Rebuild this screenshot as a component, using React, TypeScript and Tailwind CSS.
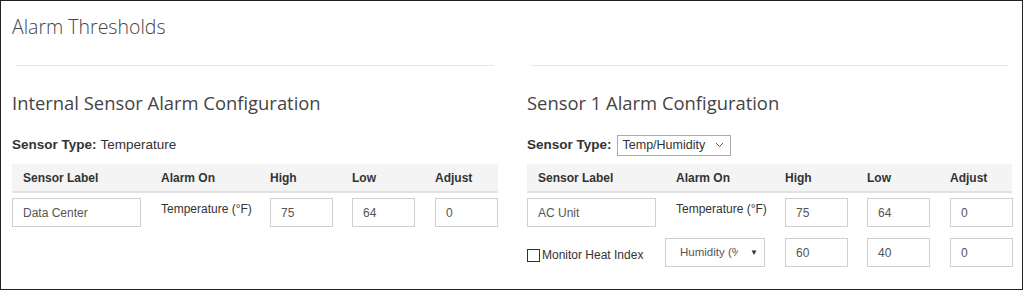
const sans = "font-['Liberation_Sans',Arial,sans-serif]";

function Field({ value, className }: { value: string; className: string }) {
  return (
    <div className={`flex h-[29px] items-center border border-[#cfcfcf] bg-white pl-[10px] text-[12px] text-[#555] ${className}`}>
      {value}
    </div>
  );
}

function HeaderRow({ cols }: { cols: string }) {
  return (
    <div className={`mt-[9px] grid ${cols} h-[29px] items-center border-b-2 border-[#e2e2e2] bg-[#f4f4f4] text-[12px] font-bold text-[#333]`}>
      <span className="pl-[11px]">Sensor Label</span>
      <span className="pl-[11px]">Alarm On</span>
      <span>High</span>
      <span>Low</span>
      <span>Adjust</span>
    </div>
  );
}

function ValueRow({ cols, label, high, low }: { cols: string; label: string; high: string; low: string }) {
  return (
    <div className={`mt-[5px] grid ${cols} items-start`}>
      <Field value={label} className="w-[129px]" />
      <span className="pl-[11px] pt-[4px] text-[12px] leading-[14px] text-[#333]">Temperature (°F)</span>
      <Field value={high} className="w-[63px]" />
      <Field value={low} className="w-[63px]" />
      <Field value="0" className="w-[63px]" />
    </div>
  );
}

export default function App() {
  const cols = "grid-cols-[138px_120px_82px_83px_63px]";
  return (
    <div className={`h-[291px] w-[1024px] bg-white ${sans}`}>
      <div className="h-[290px] w-[1023px] border border-[#222] px-[11px]">
        <h1 className="pt-[12px] font-['Open_Sans',sans-serif] text-[19.5px] leading-[28px] font-light text-[#444]">
          Alarm Thresholds
        </h1>

        <div className="mt-[24px] grid grid-cols-[486px_485px] gap-x-[29px]">
          <div>
            <div className="mx-[4px] border-t border-[#e8e8e8]" />
            <h2 className="mt-[24px] font-['Open_Sans',sans-serif] text-[18.4px] leading-[26px] text-[#444]">
              Internal Sensor Alarm Configuration
            </h2>
            <div className="mt-[19px] flex h-[20px] items-center text-[13.5px] text-[#333]">
              <span className="font-bold">Sensor Type:</span>
              <span className="ml-[4px]">Temperature</span>
            </div>
            <HeaderRow cols={cols} />
            <ValueRow cols={cols} label="Data Center" high="75" low="64" />
          </div>

          <div>
            <div className="mx-[4px] border-t border-[#e8e8e8]" />
            <h2 className="mt-[24px] font-['Open_Sans',sans-serif] text-[18.4px] leading-[26px] text-[#444]">
              Sensor 1 Alarm Configuration
            </h2>
            <div className="mt-[19px] flex h-[20px] items-center text-[13.5px] text-[#333]">
              <span className="font-bold">Sensor Type:</span>
              <div className="ml-[5px] flex h-[21px] w-[114px] items-center justify-between border border-[#a9a9a9] pl-[5px] pr-[6px] text-[12.5px]">
                <span>Temp/Humidity</span>
                <svg width="9" height="6" viewBox="0 0 9 6" fill="none" stroke="#555" strokeWidth="1">
                  <path d="M1 1l3.5 3.5L8 1" />
                </svg>
              </div>
            </div>
            <HeaderRow cols={cols} />
            <ValueRow cols={cols} label="AC Unit" high="75" low="64" />
            <div className={`mt-[11px] grid ${cols} items-center`}>
              <label className="flex items-center pt-[5px] text-[12px] text-[#333]">
                <span className="h-[13px] w-[13px] border border-[#333] bg-white" />
                <span className="ml-[2px]">Monitor Heat Index</span>
              </label>
              <div className="flex h-[29px] w-[100px] items-center border border-[#cfcfcf] pl-[14px] text-[11.5px] text-[#555]">
                <span className="w-[58px] overflow-hidden whitespace-nowrap">Humidity (%)</span>
                <span className="ml-[12px] text-[8px] text-[#333]">▼</span>
              </div>
              <Field value="60" className="w-[63px]" />
              <Field value="40" className="w-[63px]" />
              <Field value="0" className="w-[63px]" />
            </div>
          </div>
        </div>
      </div>
    </div>
  );
}
